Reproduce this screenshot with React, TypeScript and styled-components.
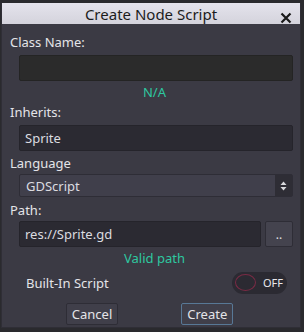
import styled, { createGlobalStyle } from 'styled-components'

const GlobalStyle = createGlobalStyle`
  html, body {
    margin: 0;
    padding: 0;
    background: #2a2a2e;
    font-family: 'Noto Sans', 'Open Sans', sans-serif;
  }
`

const Window = styled.div`
  width: 300px;
  height: 325px;
  margin: 3px 0 0 1px;
  background: #3b3a44;
  border: 1px solid #2f2e36;
  border-top: none;
  box-sizing: border-box;
  display: flex;
  flex-direction: column;
`

const TitleBar = styled.div`
  height: 21px;
  background: linear-gradient(#e4e3ec, #d4d3dc);
  color: #1c1c1c;
  font-size: 15px;
  display: flex;
  align-items: center;
  justify-content: center;
  position: relative;
  flex-shrink: 0;
`

const Close = styled.span`
  position: absolute;
  right: 8px;
  top: 5px;
  width: 12px;
  height: 12px;
`

const Body = styled.div`
  display: flex;
  flex-direction: column;
  padding: 9px 7px 0 8px;
`

const Label = styled.div`
  color: #e4e4e8;
  font-size: 13px;
  line-height: 18px;
`

const Field = styled.div<{ $dark?: boolean }>`
  height: 26px;
  box-sizing: border-box;
  background: ${(p) => (p.$dark ? '#2b2b2b' : '#2b2a32')};
  border: 1px solid ${(p) => (p.$dark ? '#242424' : '#25242b')};
  border-radius: 2px;
  color: #dcdce0;
  font-size: 13px;
  display: flex;
  align-items: center;
  padding-left: 5px;
  flex: 1;
`

const Indent = styled.div<{ $mt?: number; $mb?: number }>`
  margin: ${(p) => p.$mt ?? 0}px 0 ${(p) => p.$mb ?? 0}px 9px;
  display: flex;
  gap: 4px;
`

const Status = styled.div<{ $mb?: number }>`
  color: #2ec8a0;
  font-size: 13px;
  text-align: center;
  line-height: 18px;
  margin: 2px 0 ${(p) => p.$mb ?? 0}px 6px;
`

const Select = styled.div`
  flex: 1;
  height: 23px;
  box-sizing: border-box;
  background: #403f4b;
  border: 1px solid #2e2d36;
  border-radius: 2px;
  display: flex;
  align-items: stretch;
  color: #dcdce0;
  font-size: 13px;
`

const SelectText = styled.div`
  flex: 1;
  display: flex;
  align-items: center;
  padding-left: 6px;
`

const Arrows = styled.div`
  width: 17px;
  background: #2e2d35;
  display: flex;
  align-items: center;
  justify-content: center;
`

const SmallButton = styled.div`
  width: 28px;
  height: 26px;
  box-sizing: border-box;
  background: #44434e;
  border: 1px solid #2e2d36;
  border-radius: 2px;
  color: #e0e0e4;
  font-size: 12px;
  display: flex;
  align-items: center;
  justify-content: center;
`

const ToggleRow = styled.div`
  display: flex;
  align-items: center;
  justify-content: space-between;
  margin: 4px 6px 0 16px;
  height: 23px;
`

const Toggle = styled.div`
  width: 55px;
  height: 22px;
  border-radius: 11px;
  background: #2b2a32;
  display: flex;
  align-items: center;
  padding-left: 3px;
  gap: 7px;
  box-sizing: border-box;
  color: #e8e8ec;
  font-size: 11px;
`

const Knob = styled.div`
  width: 21px;
  height: 17px;
  border-radius: 50%;
  border: 1.5px solid #7a2b45;
  box-sizing: border-box;
`

const Buttons = styled.div`
  display: flex;
  justify-content: center;
  margin: 9px 4px 0 0;
  gap: 63px;
`

const Button = styled.div<{ $focus?: boolean }>`
  height: 22px;
  padding: 0 5px;
  box-sizing: border-box;
  background: #403f4a;
  border: 1px solid ${(p) => (p.$focus ? '#587896' : '#2e2d36')};
  border-radius: 2px;
  color: #e4e4e8;
  font-size: 13px;
  display: flex;
  align-items: center;
`

export default function App() {
  return (
    <>
      <GlobalStyle />
      <Window>
        <TitleBar>
          Create Node Script
          <Close>
            <svg width='12' height='12' viewBox='0 0 12 12'>
              <path d='M1.5 1.5 L10.5 10.5 M10.5 1.5 L1.5 10.5' stroke='#1a1a1a' strokeWidth='2.2' />
            </svg>
          </Close>
        </TitleBar>
        <Body>
          <Label>Class Name:</Label>
          <Indent $mt={4}>
            <Field $dark />
          </Indent>
          <Status $mb={2}>N/A</Status>
          <Label>Inherits:</Label>
          <Indent $mt={4} $mb={3}>
            <Field>Sprite</Field>
          </Indent>
          <Label>Language</Label>
          <Indent $mt={2} $mb={4}>
            <Select>
              <SelectText>GDScript</SelectText>
              <Arrows>
                <svg width='7' height='10' viewBox='0 0 7 10'>
                  <path d='M3.5 0.5 L6.5 4 L0.5 4 Z M3.5 9.5 L6.5 6 L0.5 6 Z' fill='#d8d8dc' />
                </svg>
              </Arrows>
            </Select>
          </Indent>
          <Label>Path:</Label>
          <Indent $mt={2}>
            <Field>res://Sprite.gd</Field>
            <SmallButton>..</SmallButton>
          </Indent>
          <Status>Valid path</Status>
          <ToggleRow>
            <Label>Built-In Script</Label>
            <Toggle>
              <Knob />
              OFF
            </Toggle>
          </ToggleRow>
          <Buttons>
            <Button>Cancel</Button>
            <Button $focus>Create</Button>
          </Buttons>
        </Body>
      </Window>
    </>
  )
}
